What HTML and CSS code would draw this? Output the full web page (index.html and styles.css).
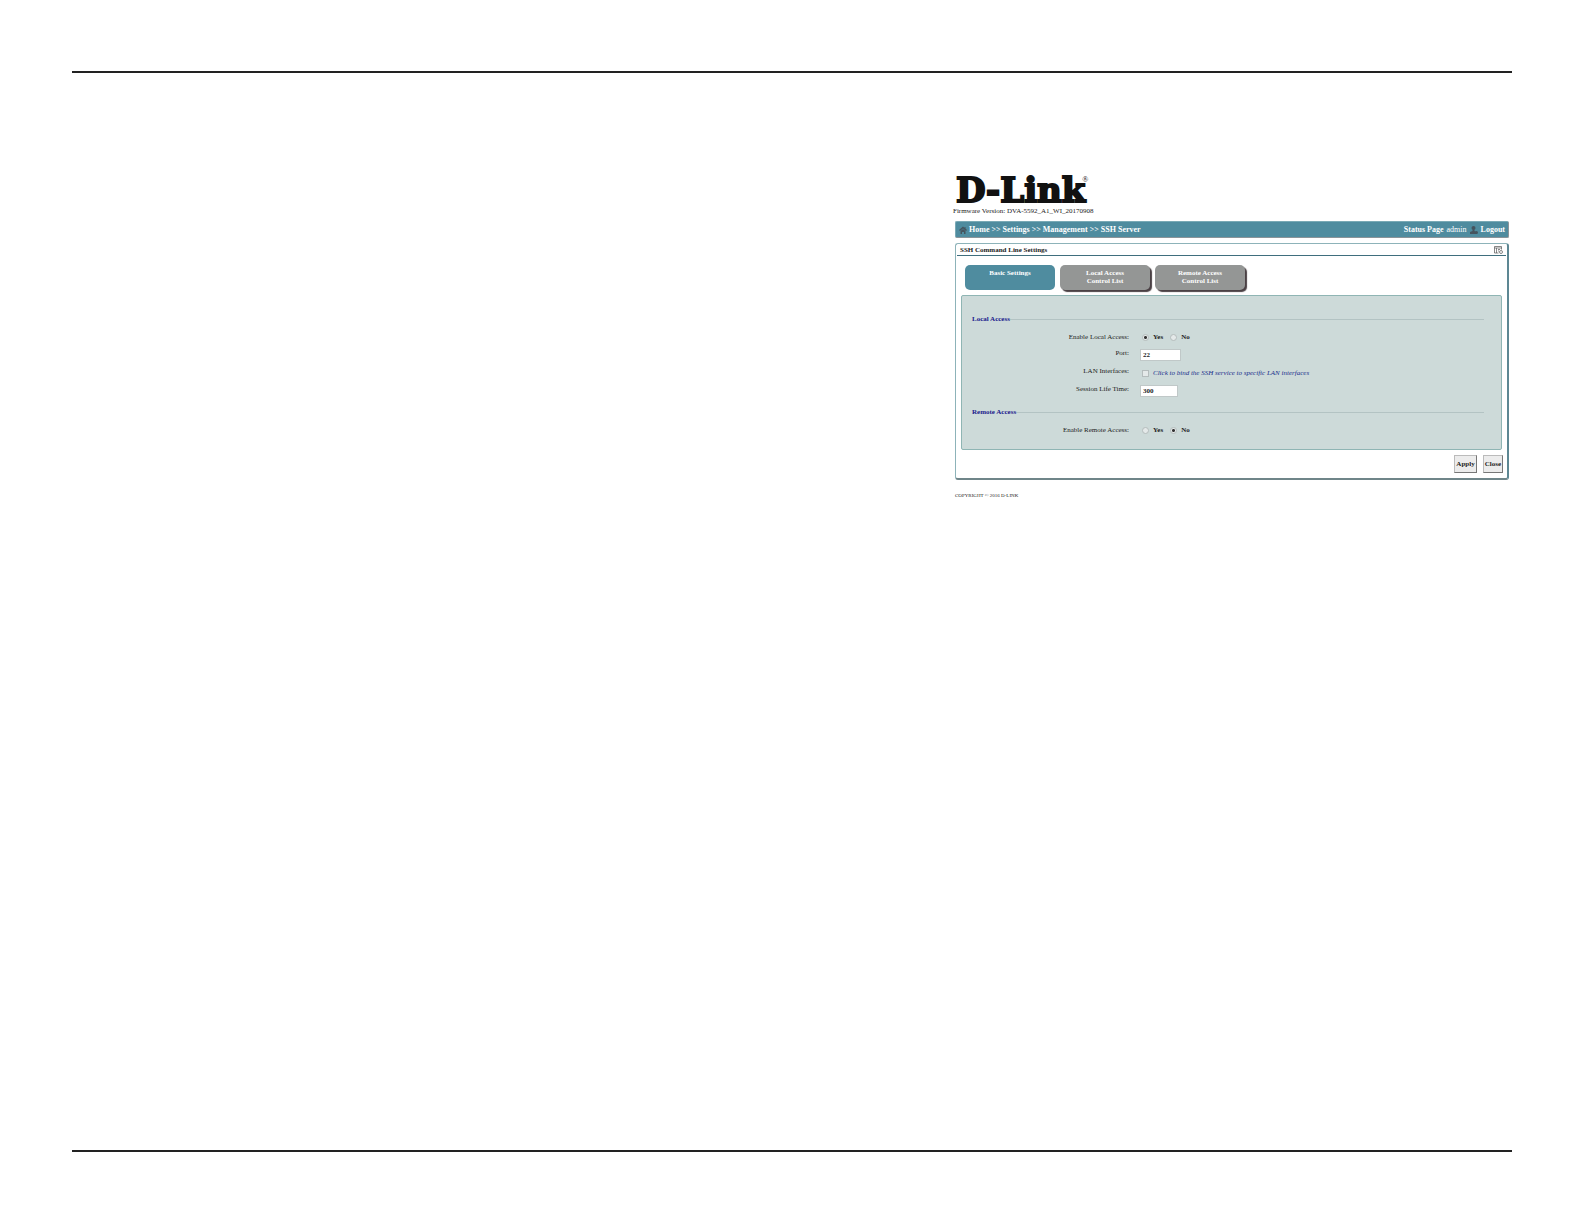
FILE: index.html
```html
<!DOCTYPE html>
<html lang="en">
<head>
    <meta charset="UTF-8">
    <meta name="viewport" content="width=device-width, initial-scale=1.0">
    <title>SSH Server</title>
    <link rel="stylesheet" href="styles.css">
</head>
<body>

    <main class="page">
        <div class="router">
            <header class="brand">
                <div class="logo">D-Link<sup>®</sup></div>
                <div class="firmware">Firmware Version: DVA-5592_A1_WI_20170908</div>
            </header>

            <nav class="navbar">
                <svg class="icon" viewBox="0 0 16 16">
                    <path d="M8 1 0 8l2 2 6-5 6 5 2-2-3-3V2h-2v2z"/>
                    <path d="M3 10l5-4 5 4v6h-3v-4H6v4H3z"/>
                </svg>
                <div class="crumbs">
                    <a href="#">Home</a> &gt;&gt; <a href="#">Settings</a> &gt;&gt; <a href="#">Management</a> &gt;&gt; <a href="#">SSH Server</a>
                </div>
                <div class="account">
                    <a href="#">Status Page</a>
                    <span class="user">admin</span>
                    <svg class="icon" viewBox="0 0 16 16">
                        <circle cx="7" cy="4" r="4"/>
                        <path d="M5 7h4v3l5 2v4H0v-4l5-2z"/>
                        <circle cx="13" cy="13" r="3"/>
                    </svg>
                    <a href="#">Logout</a>
                </div>
            </nav>

            <form class="window">
                <div class="title">
                    <h1>SSH Command Line Settings</h1>
                    <svg class="help" viewBox="0 0 18 16">
                        <path d="M1 1h14v6M1 1v13h8M1 4h14M5 4v10M8 7h4M8 10h2"/>
                        <circle cx="14" cy="12" r="3"/>
                    </svg>
                </div>

                <div class="tabs">
                    <button type="button" class="tab active">Basic Settings</button>
                    <button type="button" class="tab">Local Access<br>Control List</button>
                    <button type="button" class="tab">Remote Access<br>Control List</button>
                </div>

                <div class="panel">
                    <fieldset>
                        <legend>Local Access</legend>
                        <div class="row radio-row">
                            <span class="name">Enable Local Access:</span>
                            <div class="choices">
                                <label><input type="radio" name="local" checked>Yes</label>
                                <label><input type="radio" name="local">No</label>
                            </div>
                        </div>
                        <div class="row">
                            <label class="name" for="port">Port:</label>
                            <input type="text" id="port" class="port" value="22">
                        </div>
                        <div class="row">
                            <span class="name">LAN Interfaces:</span>
                            <label class="hint"><input type="checkbox">Click to bind the SSH service to specific LAN interfaces</label>
                        </div>
                        <div class="row">
                            <label class="name" for="life">Session Life Time:</label>
                            <input type="text" id="life" class="life" value="300">
                        </div>
                    </fieldset>
                    <fieldset>
                        <legend>Remote Access</legend>
                        <div class="row radio-row">
                            <span class="name">Enable Remote Access:</span>
                            <div class="choices">
                                <label><input type="radio" name="remote">Yes</label>
                                <label><input type="radio" name="remote" checked>No</label>
                            </div>
                        </div>
                    </fieldset>
                </div>

                <div class="buttons">
                    <button type="submit" class="btn">Apply</button>
                    <button type="button" class="btn">Close</button>
                </div>
            </form>

            <footer class="copyright">COPYRIGHT © 2016 D-LINK</footer>
        </div>
    </main>

</body>
</html>
```
FILE: styles.css
```css
* {
    box-sizing: border-box;
}
body {
    margin: 0;
    padding: 71px 72px 72px;
    min-height: 100vh;
    display: flex;
    background-color: #fff;
    font-family: "Liberation Serif", "Times New Roman", serif;
    font-size: 7px;
    line-height: 8px;
    color: #222;
}
button, input {
    font-family: inherit;
    font-size: inherit;
    font-weight: bold;
    line-height: inherit;
}
a {
    color: inherit;
    text-decoration: none;
}
.page {
    flex: 1;
    display: grid;
    grid-template-columns: 881fr 559fr;
    align-items: start;
    border-top: 2px solid #222;
    border-bottom: 2px solid #222;
}
.router {
    grid-column: 2;
    padding: 100px 3px 0 0;
}

/* logo */
.logo {
    padding-left: 3px;
    font-family: "DejaVu Serif", serif;
    font-size: 34px;
    font-weight: bold;
    line-height: 34px;
    color: #111;
    -webkit-text-stroke: 2px #111;
}
.logo sup {
    margin-left: -3px;
    font-family: "Liberation Serif", serif;
    font-size: 8px;
    font-weight: normal;
    line-height: 8px;
    vertical-align: 20px;
    -webkit-text-stroke: 0;
}

/* top bar */
.navbar {
    display: flex;
    align-items: center;
    gap: 2px;
    height: 17px;
    margin: 6px 0 5px 2px;
    padding: 0 3px;
    background-color: #4f8c9f;
    border: 1px solid #79a9b5;
    border-right-color: #8b9499;
    border-bottom-color: #8b9499;
    border-radius: 2px;
    color: #fff;
    font-size: 8px;
    font-weight: bold;
}
.icon {
    width: 8px;
    height: 8px;
    fill: #45545e;
}
.account {
    display: flex;
    align-items: center;
    gap: 3px;
    margin-left: auto;
}
.user {
    font-weight: normal;
}

/* settings window */
.window {
    margin-left: 2px;
    padding: 0 5px 5px;
    border: 1px solid #8db3b9;
    border-right: 2px solid #5d8793;
    border-bottom: 2px solid #6f8589;
    border-radius: 3px;
}
.title {
    display: flex;
    align-items: center;
    justify-content: space-between;
    height: 12px;
    margin: 0 -4px 9px;
    padding: 0 3px;
    border-bottom: 1px solid #3f6e7d;
}
.title h1 {
    margin: 0;
    font-size: 7px;
}
.help {
    width: 9px;
    height: 8px;
    fill: none;
    stroke: #555;
    stroke-width: 1.4;
}
.tabs {
    display: flex;
    gap: 5px;
    margin: 0 0 5px 4px;
}
.tab {
    display: flex;
    justify-content: center;
    width: 90px;
    height: 25px;
    padding: 4px 0;
    border: none;
    border-radius: 5px;
    background-color: #949695;
    box-shadow: 2px 2px 1px #4a4044;
    color: #fff;
    cursor: pointer;
}
.tab.active {
    background-color: #4f8c9f;
    box-shadow: none;
}
.panel {
    padding: 18px 17px 10px 10px;
    background-color: #cddad9;
    border: 1px solid #8fb5b4;
    border-radius: 2px;
}
fieldset {
    min-width: 0;
    margin: 0;
    padding: 4px 0 0;
    border: none;
    border-top: 1px solid #b3c3c3;
}
fieldset + fieldset {
    margin-top: 7px;
}
legend {
    padding: 0;
    line-height: 10px;
    font-weight: bold;
    color: #20208c;
}
.row {
    display: grid;
    grid-template-columns: 157fr 344fr;
    column-gap: 11px;
    align-items: center;
    height: 18px;
}
.name {
    align-self: start;
    line-height: 14px;
    text-align: right;
}
.radio-row .name {
    align-self: center;
}
.choices {
    display: flex;
    gap: 5px;
    font-weight: bold;
}
.choices label, .hint {
    display: flex;
    align-items: center;
    gap: 4px;
}
.hint {
    font-style: italic;
    color: #20308c;
}
input[type="text"] {
    height: 12px;
    padding: 0 2px;
    border: 1px solid #c0c8c8;
    background-color: #fff;
    color: #222;
}
.port {
    width: 41px;
}
.life {
    width: 38px;
}
input[type="radio"], input[type="checkbox"] {
    appearance: none;
    width: 7px;
    height: 7px;
    margin: 0 0 0 2px;
    border: 1px solid #b4bcbc;
    background-color: #e4e9e9;
}
input[type="radio"] {
    border-radius: 50%;
}
input[type="radio"]:checked {
    background-image: radial-gradient(circle, #333 1px, transparent 2px);
}
.buttons {
    display: flex;
    justify-content: flex-end;
    gap: 6px;
    margin: 5px -1px 0 0;
}
.btn {
    height: 18px;
    padding: 0 1px;
    border: 1px solid #bbb;
    border-right-color: #777;
    border-bottom-color: #777;
    background-color: #ececec;
    color: #222;
    cursor: pointer;
}
.copyright {
    margin: 12px 0 0 2px;
    font-size: 5px;
}
```
